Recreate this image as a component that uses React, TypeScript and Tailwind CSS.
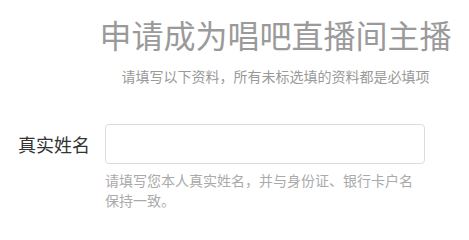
import React from "react";

export default function App() {
  const font = { fontFamily: '"Noto Sans CJK SC", "Noto Sans", sans-serif' };
  return (
    <div className="w-[469px] h-[215px] bg-white overflow-hidden" style={font}>
      <div className="pl-[82px] pt-[18px] text-center">
        <h1 className="text-[32px] leading-[32px] text-[#9a9a9a] font-normal whitespace-nowrap">
          申请成为唱吧直播间主播
        </h1>
        <p className="mt-[16px] text-[14px] leading-[20px] text-[#9a9a9a] whitespace-nowrap">
          请填写以下资料，所有未标选填的资料都是必填项
        </p>
      </div>
      <div className="mt-[38px] flex items-start">
        <label className="w-[105px] pl-[18px] h-[40px] flex items-center text-[18px] text-[#333] whitespace-nowrap">
          真实姓名
        </label>
        <div className="w-[320px]">
          <input
            type="text"
            className="block w-[320px] h-[40px] border border-[#dcdcdc] rounded-[4px] outline-none px-2"
          />
          <p className="mt-[6px] text-[14px] leading-[20px] text-[#aaaaaa]">
            请填写您本人真实姓名，并与身份证、银行卡户名保持一致。
          </p>
        </div>
      </div>
    </div>
  );
}
